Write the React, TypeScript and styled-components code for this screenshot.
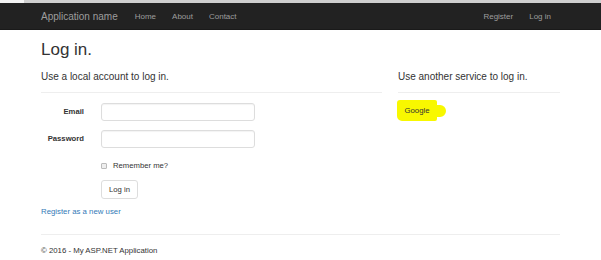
import React from "react";
import styled, { createGlobalStyle } from "styled-components";

const Global = createGlobalStyle`
  html, body { margin: 0; padding: 0; background: #fff; }
  body { font-family: "Liberation Sans", Arial, sans-serif; color: #333; }
  * { box-sizing: border-box; }
`;

const TopStrip = styled.div`
  height: 3px;
  background: linear-gradient(to right, #f4f4f4 0 24px, #cfcfcf 24px 100%);
`;

const Navbar = styled.nav`
  height: 27px;
  background: #222;
  border-bottom: 1px solid #1a1a1a;
  display: flex;
  align-items: center;
  padding: 0 41px;
`;

const Brand = styled.a`
  color: #9d9d9d;
  font-size: 10px;
  text-decoration: none;
  margin-right: 17px;
`;

const NavLinks = styled.div<{ $right?: boolean }>`
  display: flex;
  gap: 16px;
  margin-left: ${(p) => (p.$right ? "auto" : "0")};
  padding-right: ${(p) => (p.$right ? "9px" : "0")};
`;

const NavLink = styled.a`
  color: #9d9d9d;
  font-size: 8px;
  text-decoration: none;
`;

const Container = styled.div`
  width: 519px;
  margin-left: 41px;
`;

const Title = styled.h2`
  margin: 9px 0 0;
  font-size: 17px;
  font-weight: 400;
  line-height: 22px;
`;

const Row = styled.div`
  display: grid;
  grid-template-columns: 341px 162px;
  column-gap: 16px;
`;

const Subtitle = styled.h4`
  margin: 10px 0 0;
  font-size: 10px;
  font-weight: 400;
  line-height: 12px;
`;

const Rule = styled.hr`
  border: 0;
  border-top: 1px solid #eee;
  margin: 9px 0 0;
`;

const Form = styled.form`
  display: grid;
  grid-template-columns: 60px 154px;
  row-gap: 9px;
  margin-top: 10px;
  align-items: center;
`;

const Label = styled.label`
  font-size: 7.7px;
  line-height: 10px;
  font-weight: 700;
  text-align: right;
  padding-right: 17px;
`;

const Input = styled.input`
  height: 18px;
  width: 154px;
  border: 1px solid #ddd;
  border-radius: 3px;
  box-shadow: inset 0 1px 1px rgba(0,0,0,0.05);
`;

const Check = styled.label`
  grid-column: 2;
  display: flex;
  align-items: center;
  gap: 6px;
  font-size: 7.7px;
  line-height: 10px;
  margin-top: 4px;
`;

const Box = styled.span`
  width: 6px;
  height: 6px;
  border: 1px solid #bbb;
  background: #eee;
  border-radius: 1px;
`;

const Button = styled.button`
  grid-column: 2;
  justify-self: start;
  height: 19px;
  padding: 0 7px;
  font-family: inherit;
  font-size: 7.7px;
  color: #333;
  background: #fff;
  border: 1px solid #ddd;
  border-radius: 3px;
  margin-top: 0;
`;

const RegisterLink = styled.a`
  display: block;
  margin-top: 8px;
  font-size: 7.8px;
  line-height: 10px;
  color: #337ab7;
  text-decoration: none;
`;

const Google = styled.button`
  position: relative;
  margin-top: 7px;
  margin-left: -1px;
  height: 21px;
  width: 40px;
  border: 0;
  border-radius: 3px 2px 2px 5px;
  background: #f8f800;
  font-family: inherit;
  font-size: 7.8px;
  color: #333;
  padding: 0;
  &::after {
    content: "";
    position: absolute;
    right: -9px;
    top: 5px;
    width: 10px;
    height: 12px;
    background: #f8f800;
    border-radius: 1px 6px 6px 1px;
  }
`;

const FooterRule = styled.hr`
  border: 0;
  border-top: 1px solid #eee;
  margin: 17px 0 0;
`;

const Footer = styled.footer`
  font-size: 7.8px;
  line-height: 10px;
  margin-top: 11px;
`;

export default function App() {
  return (
    <>
      <Global />
      <TopStrip />
      <Navbar>
        <Brand href="#">Application name</Brand>
        <NavLinks>
          <NavLink href="#">Home</NavLink>
          <NavLink href="#">About</NavLink>
          <NavLink href="#">Contact</NavLink>
        </NavLinks>
        <NavLinks $right>
          <NavLink href="#">Register</NavLink>
          <NavLink href="#">Log in</NavLink>
        </NavLinks>
      </Navbar>
      <Container>
        <Title>Log in.</Title>
        <Row>
          <section>
            <Subtitle>Use a local account to log in.</Subtitle>
            <Rule />
            <Form>
              <Label>Email</Label>
              <Input />
              <Label>Password</Label>
              <Input type="password" />
              <Check>
                <Box />
                Remember me?
              </Check>
              <Button type="button">Log in</Button>
            </Form>
            <RegisterLink href="#">Register as a new user</RegisterLink>
          </section>
          <section>
            <Subtitle>Use another service to log in.</Subtitle>
            <Rule />
            <Google type="button">Google</Google>
          </section>
        </Row>
        <FooterRule />
        <Footer>© 2016 - My ASP.NET Application</Footer>
      </Container>
    </>
  );
}
